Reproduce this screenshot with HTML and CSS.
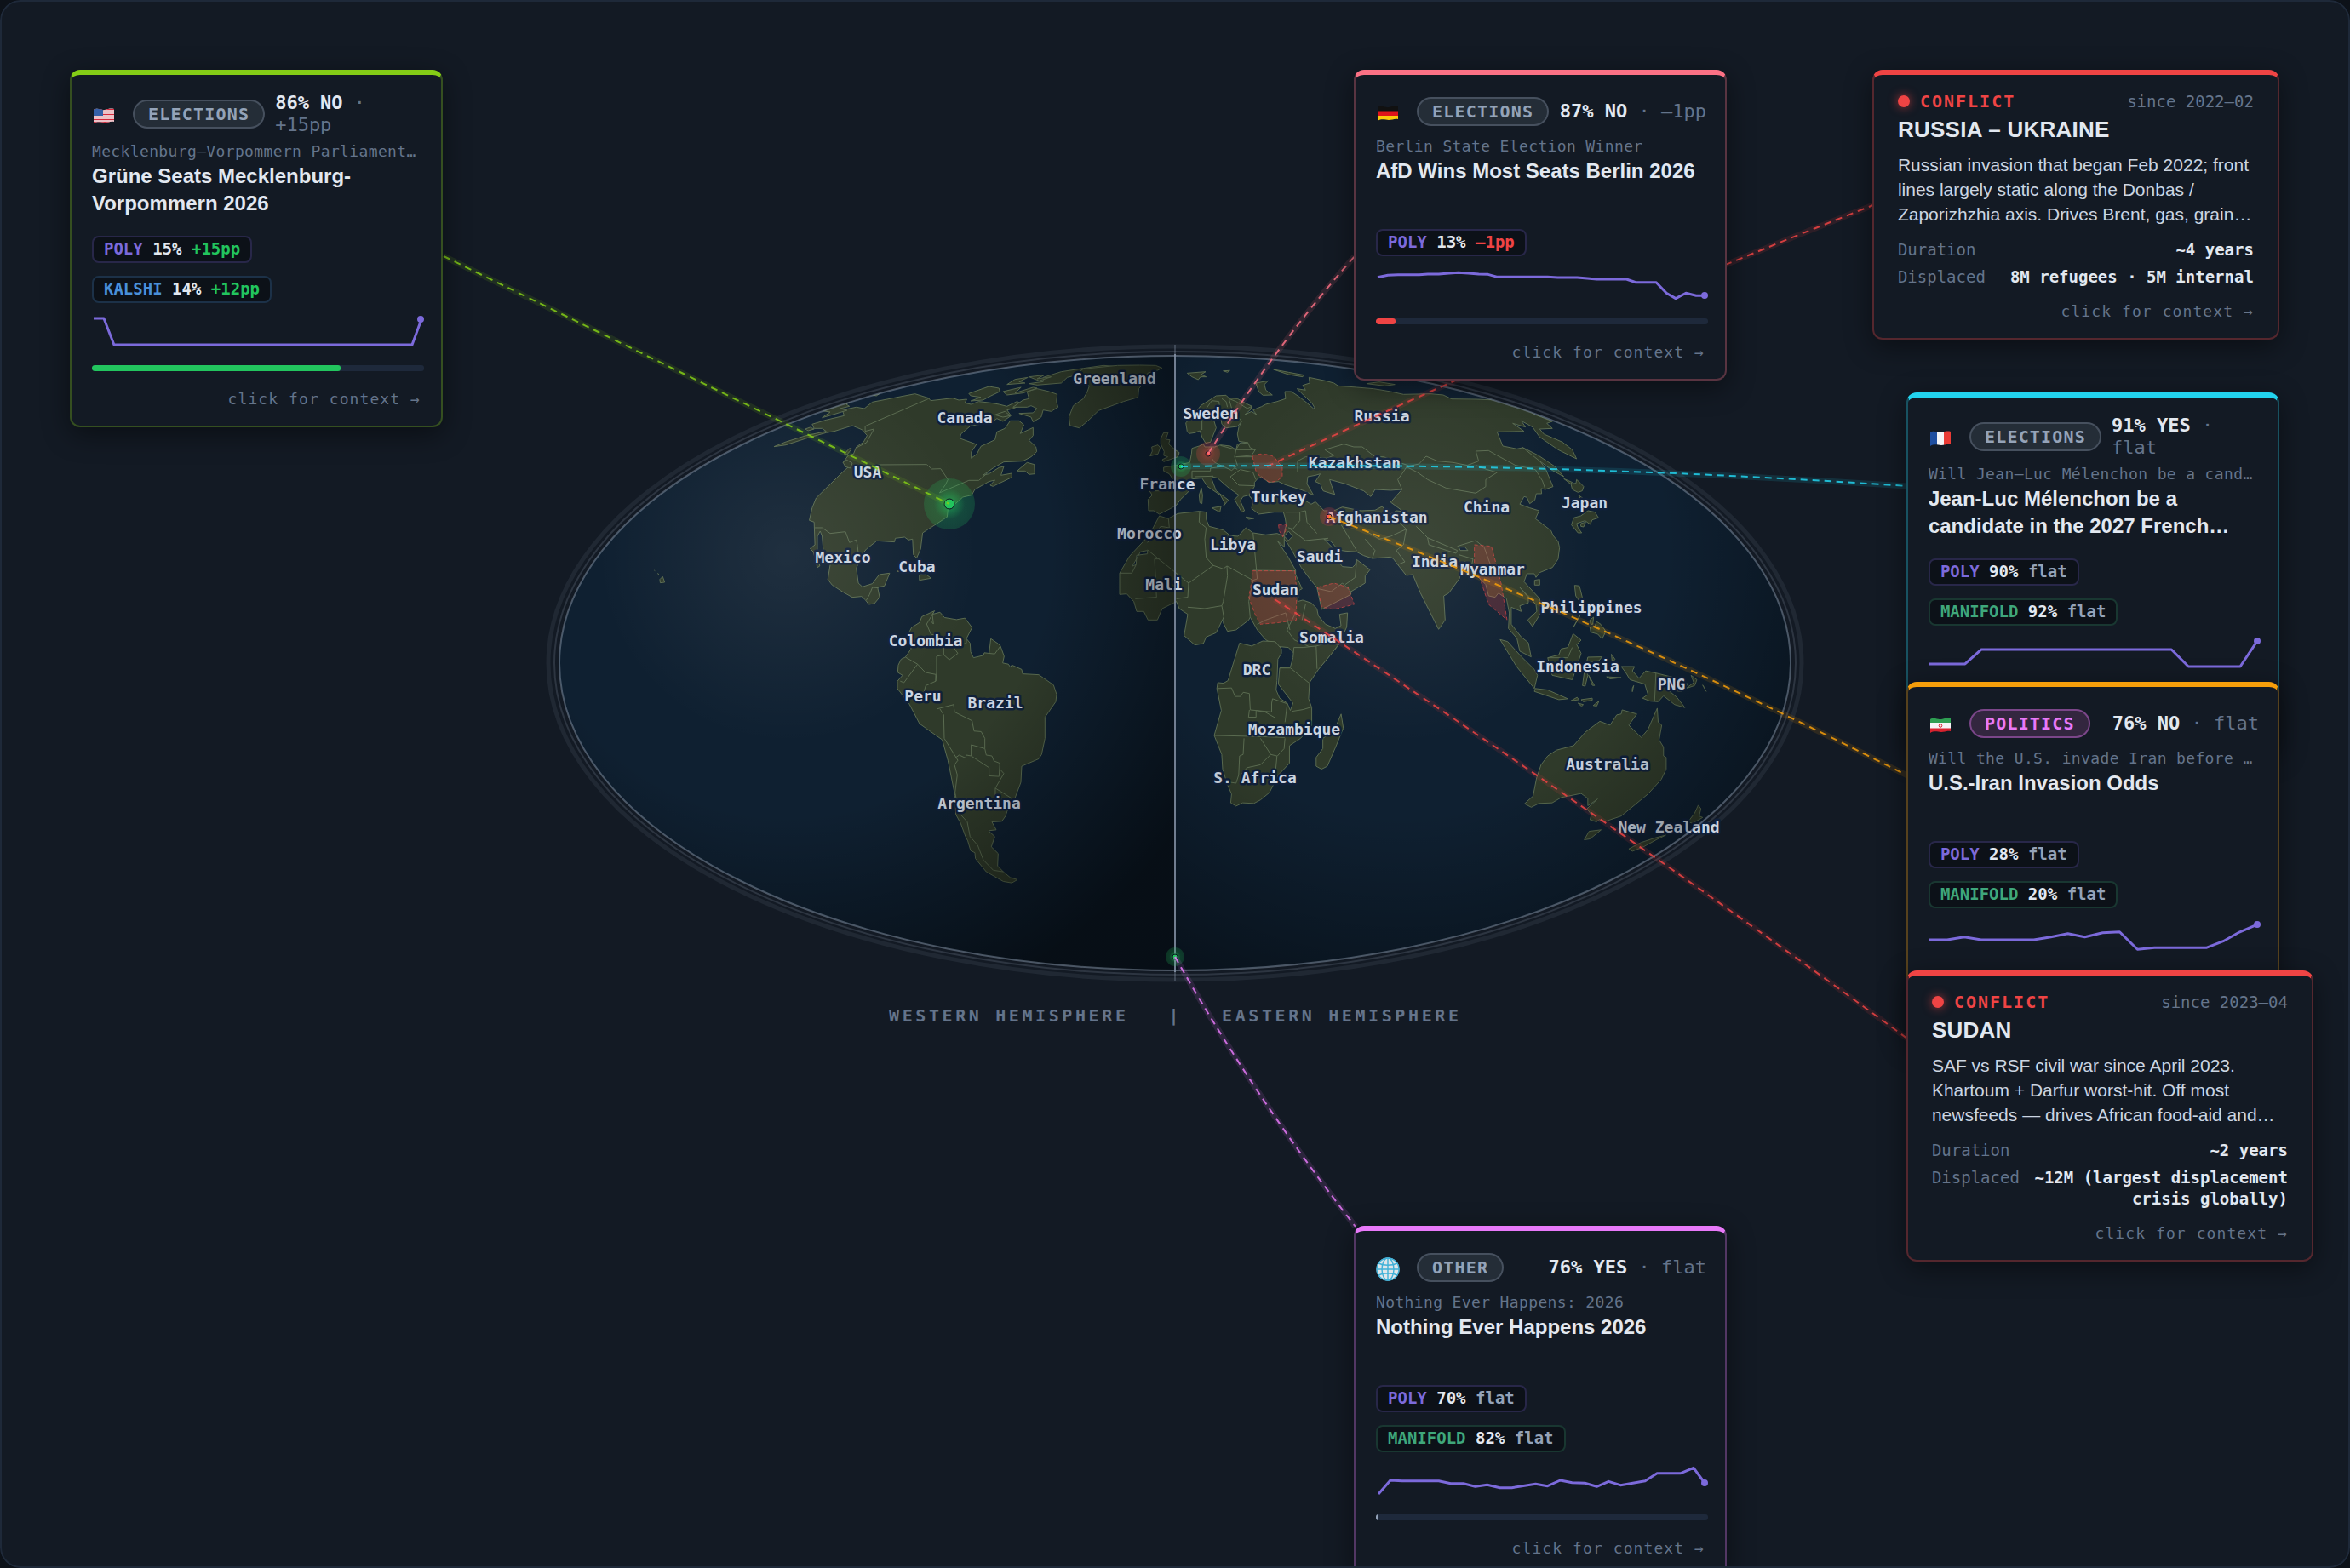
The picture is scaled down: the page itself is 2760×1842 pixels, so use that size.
FILE: index.html
```html
<!DOCTYPE html>
<html lang="en">
<head>
<meta charset="utf-8">
<meta name="viewport" content="width=device-width, initial-scale=1">
<title>World odds map</title>
<link rel="stylesheet" href="styles.css">
</head>
<body>
<main class="stage">
<svg class="world" viewBox="0 0 2760 1842" role="img" aria-label="World map with prediction markets and conflicts">
  <defs>
    <clipPath id="globe"><ellipse cx="1380" cy="779" rx="723" ry="361"/></clipPath>
    <radialGradient id="shadeWest" gradientUnits="userSpaceOnUse" cx="925" cy="650" r="560">
      <stop offset="0" stop-color="#fff" stop-opacity=".07"/>
      <stop offset=".4" stop-color="#fff" stop-opacity="0"/>
      <stop offset=".55" stop-color="#000" stop-opacity="0"/>
      <stop offset="1" stop-color="#000" stop-opacity=".55"/>
    </radialGradient>
    <radialGradient id="shadeEast" gradientUnits="userSpaceOnUse" cx="1648" cy="650" r="560">
      <stop offset="0" stop-color="#fff" stop-opacity=".07"/>
      <stop offset=".4" stop-color="#fff" stop-opacity="0"/>
      <stop offset=".55" stop-color="#000" stop-opacity="0"/>
      <stop offset="1" stop-color="#000" stop-opacity=".45"/>
    </radialGradient>
    <radialGradient id="glowGreen">
      <stop offset="0" stop-color="#22c55e" stop-opacity=".7"/>
      <stop offset=".6" stop-color="#22c55e" stop-opacity=".24"/>
      <stop offset="1" stop-color="#22c55e" stop-opacity=".2"/>
    </radialGradient>
    <radialGradient id="glowRed">
      <stop offset="0" stop-color="#ef4444" stop-opacity=".5"/>
      <stop offset=".6" stop-color="#ef4444" stop-opacity=".26"/>
      <stop offset="1" stop-color="#ef4444" stop-opacity=".2"/>
    </radialGradient>
  </defs>

  <ellipse class="ring ring-outer" cx="1380" cy="779" rx="736" ry="372"/>
  <ellipse class="ring ring-inner" cx="1380" cy="779" rx="729" ry="366"/>
  <ellipse class="ocean" cx="1380" cy="779" rx="723" ry="361"/>

  <g clip-path="url(#globe)">
    <!-- North America -->
    <g transform="translate(640 400) scale(.4719 .3333)">
      <g class="land">
        <path d="M815 217 921 188 955 203 960 212 1015 203 1030 210 1050 207 1045 220 1060 225 1080 215 1110 220 1130 225 1150 232 1175 215 1190 225 1165 240 1150 245 1160 265 1140 285 1125 275 1110 290 1060 300 1035 330 1033 345 1074 366 1061 393 1061 415 1075 400 1085 373 1120 350 1125 322 1145 310 1158 283 1180 283 1192 297 1183 328 1215 307 1215 335 1205 352 1222 375 1224 392 1210 410 1190 425 1142 428 1115 450 1090 475 1105 470 1130 448 1142 444 1135 475 1162 468 1162 482 1115 514 1108 510 1120 492 1105 497 1070 525 1062 545 1040 552 1022 575 1003 595 1001 622 940 678 935 735 925 767 917 755 915 700 905 703 895 693 872 697 870 710 826 706 800 735 788 757 775 803 780 855 790 868 815 857 832 825 858 820 845 865 828 870 833 905 820 927 806 930 798 915 788 902 765 905 740 885 715 862 704 842 710 790 693 745 690 690 685 672 678 690 678 745 684 795 678 800 668 745 660 733 672 720 670 640 658 634 665 590 675 555 740 465 760 440 742 430 755 405 768 400 775 375 793 358 802 335 790 315 765 300 720 320 700 325 650 345 600 368 570 374 600 357 650 335 700 320 690 310 670 310 665 295 700 280 745 265 740 245 775 235 795 240Z"/>
        <path d="M1200 180 1225 170 1255 180 1275 190 1273 215 1277 235 1260 250 1240 245 1235 270 1215 287 1210 270 1180 257 1215 255 1225 240 1210 230 1200 235 1165 235 1190 210 1205 205Z"/>
        <path d="M1055 187 1105 162 1130 168 1132 180 1110 195 1090 210 1060 213 1085 200 1060 195Z"/>
        <path d="M1240 130 1285 110 1340 98 1390 88 1428 92 1400 102 1350 112 1300 130 1285 150 1225 157 1205 152 1240 145Z"/>
        <path d="M1150 155 1170 137 1202 130 1180 145 1195 150Z"/>
        <path d="M1140 180 1185 165 1170 185 1215 165 1225 168 1190 185 1150 192Z"/>
        <path d="M1205 128 1242 122 1225 135 1260 128 1230 142Z"/>
        <path d="M1120 262 1145 250 1158 265 1140 270Z"/>
        <path d="M690 248 762 213 750 225 758 232 735 240 752 246 715 262 690 272 710 252Z"/>
        <path d="M812 192 833 187 825 195Z"/>
        <path d="M648 312 660 306 670 312 655 318Z"/>
        <path d="M1175 460 1200 430 1218 437 1219 470 1205 472 1195 460Z"/>
        <path d="M742 430 750 420 765 432 760 450 748 445Z"/>
        <path d="M745 400 758 380 764 382 752 402Z"/>
        <path d="M1340 100 1425 88 1480 87 1520 88 1536 97 1525 105 1500 115 1490 150 1478 170 1476 200 1440 215 1378 247 1350 285 1330 308 1307 300 1304 270 1315 230 1340 205 1350 180 1355 160 1330 140 1320 120Z"/>
        <path d="M876 813 884 811 880 815Z"/>
        <path d="M932 825 950 826 961 838 932 845Z"/>
        <path d="M286 842 293 832 298 852 287 854ZM280 821l4 3M272 810l2 2"/>
      </g>
      <path class="border" d="M955 205 797 302 797 320 819 312 800 360 775 378M828 438 950 437 963 453 985 452 1003 490 997 508 982 537 1055 493 1080 493 1103 465M672 660 690 660 710 680 748 674 758 712 775 703 778 725 780 750M800 915 808 895 815 870 830 872"/>
    </g>

    <!-- South America -->
    <g transform="translate(980 690) scale(.3333 .3444)">
      <path class="land" d="M353 80 345 92 372 85 388 103 430 110 460 105 485 137 465 175 478 190 480 220 490 240 525 232 528 223 545 225 551 175 578 193 585 200 598 235 593 258 613 262 620 272 625 265 660 280 663 295 720 298 772 333 783 365 780 390 742 443 742 515 730 570 720 585 660 610 657 665 635 722 625 735 608 765 603 780 590 798 555 800 570 827 543 830 565 850 553 885 577 908 575 950 595 970 620 990 645 997 625 1008 595 1003 535 970 497 925 495 905 480 898 470 865 462 850 445 805 428 775 425 710 400 590 380 520 300 465 265 400 222 345 222 320 240 300 223 290 225 265 235 245 250 238 270 210 265 150 272 137 300 120 308 100Z"/>
      <path class="border" d="M350 85 325 125 340 160 370 165 385 200M345 92 349 125 340 115M250 238 293 262 320 290 357 297 357 320 322 335 315 358M293 262 245 325 232 320M385 200 385 230 360 235 360 290 357 320M385 230 405 247 435 225 420 205 465 190 465 175M545 225 565 227 585 200M360 415 420 400 423 425 485 455 492 490 517 492 530 515 530 550 482 537 482 575 465 572 462 582 440 572 425 582M372 415 385 435 387 515 435 590 423 605 433 640 425 700 440 770 468 800 478 850 505 880 525 930 560 965 595 970M482 575 545 615 545 643 580 645 583 600 562 592 555 575 535 572 530 550M583 620 597 635 567 685 625 720M567 685 567 710"/>
    </g>

    <!-- Europe, Asia and northern Africa -->
    <g transform="translate(1300 400) scale(.3333)">
      <g class="land">
        <path d="M200 325 216 325 207 348 222 350 218 365 240 385 255 395 250 410 200 427 195 420 215 410 200 405 202 392 190 365 190 345Z"/>
        <path d="M158 375 180 368 188 378 180 400 152 407 160 390Z"/>
        <path d="M283 115 348 110 332 120 350 128 330 128 322 138 300 128Z"/>
        <path d="M410 107 433 106 425 112Z"/>
        <path d="M525 150 568 142 555 155 560 175 583 192 550 193 535 180Z"/>
        <path d="M587 102 640 112 695 122 690 128 640 120Z"/>
        <path d="M915 152 960 146 1015 155 980 160Z"/>
        <path d="M325 545 333 520 337 545 335 575 328 572Z"/>
        <path d="M370 590 402 585 398 605Z"/>
        <path d="M490 622 518 627 500 630Z"/>
        <path d="M370 205 385 195 420 193 430 203 460 205 490 222 512 232 505 245 480 235 455 240 468 265 475 285 460 303 420 308 405 295 400 265 385 270 378 285 385 308 370 345 365 358 348 362 335 340 328 318 310 325 290 328 283 320 278 290 310 260 330 230Z"/>
        <path d="M430 205 455 215 495 240 510 232 505 245 485 262 510 250 528 262 515 245 545 233 560 225 600 215 630 205 627 180 650 180 680 200 705 220 728 240 733 238 722 220 685 185 670 170 700 175 690 158 715 150 712 130 770 142 800 150 815 160 880 165 940 170 1000 180 1045 190 1140 188 1185 192 1215 206 1300 207 1375 210 1440 232 1495 252 1510 262 1570 285 1550 292 1570 310 1525 312 1540 330 1605 358 1640 385 1655 417 1590 385 1525 340 1500 305 1460 283 1475 305 1430 292 1470 320 1375 322 1395 372 1445 382 1465 378 1510 405 1545 450 1572 515 1545 525 1530 522 1532 540 1513 540 1508 562 1490 575 1480 553 1470 550 1455 577 1490 590 1523 600 1510 628 1565 670 1572 687 1590 708 1595 730 1590 770 1570 800 1525 818 1512 835 1506 822 1480 822 1470 850 1525 910 1532 955 1500 1008 1483 985 1515 955 1512 930 1455 870 1485 905 1485 925 1455 935 1460 955 1425 940 1425 1000 1460 1045 1485 1065 1495 1115 1455 1095 1445 1050 1415 1015 1418 960 1408 910 1380 890 1368 905 1345 900 1335 860 1305 830 1295 795 1260 780 1245 795 1243 838 1205 890 1187 900 1192 985 1169 1018 1105 890 1078 825 1055 828 1025 790 1010 770 1000 763 935 768 905 758 880 745 840 742 815 738 790 708 765 700 795 730 805 765 830 797 865 800 875 790 880 772 927 808 910 830 910 855 860 885 860 895 757 948 740 870 715 840 685 800 655 745 640 720 625 700 622 690 632 650 628 625 622 605 590 605 535 612 510 592 515 565 500 545 480 550 470 565 485 600 475 605 450 560 465 545 430 520 390 485 372 480 370 490 385 530 428 562 410 585 415 572 400 545 355 515 335 485 300 488 300 510 290 530 260 560 245 580 225 592 185 612 165 600 147 600 145 560 160 545 150 530 235 530 240 500 220 470 200 460 200 447 245 440 292 430 298 400 300 380 325 372 340 365 345 375 380 375 400 368 435 372 455 385 460 365 497 360 465 355 460 330 465 305 475 285 440 240Z"/>
        <path d="M185 618 215 628 250 610 325 602 350 605 350 630 360 655 410 668 435 688 462 690 490 660 515 678 560 685 600 680 625 690 625 728 600 705 640 765 665 810 665 825 688 875 678 880 672 920 690 915 720 925 740 945 745 970 770 1000 805 1015 825 1005 820 965 848 960 845 1010 815 1075 740 1165 715 1200 690 1170 650 1150 662 1105 640 1082 600 1078 560 1055 530 1020 505 975 500 985 455 1020 425 1025 410 995 412 975 385 1030 350 1045 340 1068 310 1073 272 1040 285 965 255 945 245 920 195 945 178 985 145 985 130 955 105 955 95 920 70 893 45 895 45 820 80 760 150 685Z"/>
      </g>
      <path class="sea" d="M520 500 530 488 545 480 570 500 605 497 625 507 690 528 728 545 705 505 708 480 735 475 752 470 735 497 752 505 762 530 803 543 792 512 785 490 840 505 905 530 930 550 945 525 1000 528 1040 525 1000 570 1045 603 1020 600 1000 612 985 603 970 585 945 598 895 600 830 587 800 600 765 600 735 568 720 577 700 565 640 560 590 548 545 552 515 562 500 545 520 515Z"/>
      <path class="sea" d="M118 745 143 740 143 752 105 757 103 790 90 795ZM625 690 640 672 655 690 640 705ZM1240 728 1262 728 1272 740 1245 740Z"/>
      <path class="border" d="M335 315 335 280 350 240 370 212 395 215 400 265M405 205 420 215 425 235M143 712 190 655 220 660 217 628M143 738 288 855 375 793 350 765 345 700 350 660 325 640 327 602M288 855 285 905 245 910M375 793 410 805 423 795 515 845 530 840 515 678M423 795 425 830 410 920 405 935 412 975M103 790 88 820 45 820M185 770 168 770 175 905 100 910M285 940 345 945 405 935M515 810 665 812M515 845 500 920 505 975M530 1000 560 985 630 960 645 1020M665 960 635 1020 660 1055 715 1080 760 1080 815 1060M740 1085 738 1165M688 985 700 930"/>
      <path class="border" d="M630 605 680 605 680 635 655 665 640 660M680 605 700 600 705 640 740 680M640 660 700 705 780 697M840 860 875 835 880 775M745 875 790 885 830 855 860 885M820 640 850 690 880 740M910 700 945 740 935 768M910 670 960 700 1000 690 1055 665 1045 720 1020 740 1050 780 1025 790M1000 612 1055 665M1090 655 1130 695 1235 740 1230 750 1135 720 1130 695M1240 755 1290 770 1285 795M1235 725 1300 705 1330 730 1355 800"/>
      <path class="border" d="M672 465 672 425 700 410 775 415 800 405 768 385 835 365 870 375 900 375 945 410 975 410 1060 440 1040 470 1025 490 1040 525M1055 445 1100 435 1125 408 1165 425 1220 430 1270 440 1310 425 1300 390 1345 388 1375 405 1440 440 1510 455 1535 495 1545 525M1055 445 1095 465 1130 490 1195 520 1300 538 1335 515 1335 490 1375 465 1340 455 1300 440"/>
      <path class="border" d="M400 370 455 385 450 410 460 440 440 458 380 430 370 415M450 385 523 385 510 405 455 410 515 410M435 480 470 455 515 465 525 490M435 480 465 510 520 512M300 488 300 460 365 460 365 450 440 440 460 455M310 480 375 478M455 385 470 360 497 360 505 378 523 385"/>
      <path class="zone" d="M512 405 540 400 570 402 590 410 600 425 618 445 618 480 600 495 575 500 540 480 525 460Z"/>
      <path class="zone" d="M513 812H662L668 870V985L600 995 540 1000 520 960 500 905 510 850Z"/>
      <path class="zone" d="M742 870 800 855 850 870 872 930 800 948 757 940Z"/>
      <path class="zone" d="M1295 720 1355 725 1375 800 1390 860 1410 985 1345 930 1315 840 1295 795Z"/>
      <path class="zone" d="M605 650H632L630 670 620 692 607 670Z"/>
    </g>

    <!-- East Asian islands -->
    <g class="land" transform="translate(1680 400) scale(.3333)">
      <path d="M367 845 385 842 385 862 367 862Z"/>
      <path d="M508 863 525 865 535 905 525 918 512 900Z"/>
      <path d="M527 970 503 1012 515 990Z"/>
      <path d="M562 1010 580 1008 585 990 600 1000 618 1025 605 1052 590 1035 565 1028Z"/>
      <path d="M562 985 575 975 572 1000 565 1000Z"/>
      <path d="M495 505 513 503 515 490 528 502 540 515 535 530 520 535 500 525Z"/>
      <path d="M470 487 500 500 493 505Z"/>
      <path d="M522 545 540 558 545 580 530 560Z"/>
      <path d="M505 625 530 618 555 600 580 605 592 625 570 632 563 648 545 635 515 645 520 660 533 678 520 678 497 650Z"/>
      <path d="M530 645 547 640 540 657 530 655Z"/>
      <path d="M325 377 380 405 440 445 470 480 430 458 385 425Z"/>
    </g>

    <!-- Southern Africa, Indonesia and Oceania -->
    <g transform="translate(1300 690) scale(.523 .3444)">
      <g class="land">
        <path d="M298 190 325 200 350 183 378 185 392 210 392 225 384 245 382 318 380 350 388 378 405 395 412 420 418 395 385 330 388 275 412 272 418 240 420 205 440 205 470 200 495 190 520 195 505 225 475 280 455 325 453 380 460 410 460 470 435 515 410 540 410 600 385 640 365 700 345 725 330 737 305 735 290 746 278 735 280 705 270 670 260 620 258 570 241 505 257 420 247 345 249 325 262 327 272 318Z"/>
        <path d="M526 432 531 480 515 540 495 610 482 620 470 610 470 580 485 550 485 515 510 490Z"/>
        <path d="M883 178 900 185 930 235 960 280 967 300 960 345 920 270Z"/>
        <path d="M962 345 990 350 1035 380 1015 383 960 355Z"/>
        <path d="M1047 158 1065 180 1055 195 1065 225 1045 315 1000 300 990 240 1015 230 1020 210 1035 205Z"/>
        <path d="M1080 238 1112 237 1105 250 1075 255 1080 300 1074 337 1068 335 1072 290ZM1082 300 1095 335 1090 334ZM1090 255 1105 262 1095 268Z"/>
        <path d="M1042 387 1056 375 1060 383ZM1065 383 1090 378 1090 385 1070 390ZM1092 403 1105 388 1100 405ZM1058 395 1070 400 1066 406ZM1133 228 1141 245 1135 258ZM1122 305 1155 308 1130 312Z"/>
        <path d="M1155 270 1185 270 1180 285 1195 310 1210 285 1235 293 1280 310 1305 330 1290 355 1260 350 1280 375 1298 410 1275 400 1250 370 1238 390 1220 388 1203 378 1215 365 1208 330 1175 315 1165 290Z"/>
        <path d="M1312 300 1325 315 1320 335 1300 345 1318 325ZM1338 333 1346 355ZM1180 345 1183 335 1180 356Z"/>
        <path d="M1236 412 1238 460 1246 470 1240 520 1250 545 1250 575 1256 580 1256 620 1245 655 1215 705 1155 780 1120 798 1105 792 1100 800 1085 793 1088 775 1078 755 1102 722 1080 745 1080 720 1065 703 1020 717 1000 735 970 737 953 750 938 738 957 712 965 650 975 605 990 575 1010 555 1048 540 1075 493 1107 457 1130 470 1145 435 1155 432 1157 418 1190 432 1172 470 1200 512 1215 485Z"/>
        <path d="M1083 832 1110 827 1085 858 1072 861Z"/>
        <path d="M1328 743 1334 755 1330 780 1338 785 1315 805 1305 800 1320 770Z"/>
        <path d="M1255 845 1235 860 1205 885 1180 900 1172 892 1200 870 1230 855Z"/>
      </g>
      <path class="border" d="M247 345 280 343 288 372 300 372 306 358 320 362 322 418 370 425M241 505 320 508 400 512M308 515 306 570 298 575 296 640 290 668 278 665M345 515 368 570 382 575 378 640M368 570 345 605 315 615 300 640M320 418 318 443 335 443 335 420 355 425 378 445M370 425 370 395 372 380 405 397 400 460M415 423 440 417 460 408M388 275 412 275 453 325M470 200 472 278M383 575 398 550 400 515M1233 293 1230 388M990 240 1035 240 1045 205"/>
    </g>
  </g>

  <g class="place">
    <text x="1309" y="451">Greenland</text>
    <text x="1133" y="497">Canada</text>
    <text x="1019" y="561">USA</text>
    <text x="990" y="661">Mexico</text>
    <text x="1077" y="672">Cuba</text>
    <text x="1087" y="759">Colombia</text>
    <text x="1084" y="824">Peru</text>
    <text x="1169" y="832">Brazil</text>
    <text x="1150" y="950">Argentina</text>
    <text x="1371" y="575">France</text>
    <text x="1350" y="633">Morocco</text>
    <text x="1367" y="693">Mali</text>
    <text x="1422" y="492">Sweden</text>
    <text x="1623" y="495">Russia</text>
    <text x="1591" y="550">Kazakhstan</text>
    <text x="1502" y="590">Turkey</text>
    <text x="1617" y="614">Afghanistan</text>
    <text x="1448" y="646">Libya</text>
    <text x="1550" y="660">Saudi</text>
    <text x="1498" y="699">Sudan</text>
    <text x="1685" y="666">India</text>
    <text x="1564" y="755">Somalia</text>
    <text x="1476" y="793">DRC</text>
    <text x="1746" y="602">China</text>
    <text x="1861" y="597">Japan</text>
    <text x="1753" y="675">Myanmar</text>
    <text x="1869" y="720">Philippines</text>
    <text x="1853" y="789">Indonesia</text>
    <text x="1963" y="810">PNG</text>
    <text x="1520" y="863">Mozambique</text>
    <text x="1888" y="904">Australia</text>
    <text x="1960" y="978">New Zealand</text>
    <text x="1474" y="920">S. Africa</text>
  </g>

  <g clip-path="url(#globe)">
    <rect x="657" y="418" width="723" height="722" fill="url(#shadeWest)"/>
    <rect x="1380" y="418" width="723" height="722" fill="url(#shadeEast)"/>
  </g>
  <ellipse class="ring ring-edge" cx="1380" cy="779" rx="723" ry="361"/>
  <path class="meridian" d="M1380 405V418M1380 1140V1152" opacity=".4"/>
  <path class="meridian" d="M1380 416V1142"/>

  <g class="marker up">
    <circle cx="1115" cy="592" r="30" fill="url(#glowGreen)"/><circle class="dot" cx="1115" cy="592" r="6"/>
    <circle cx="1387" cy="548" r="12" fill="url(#glowGreen)"/><circle class="dot" cx="1387" cy="548" r="3"/>
    <circle cx="1380" cy="1124" r="11" fill="url(#glowGreen)"/><circle class="dot" cx="1380" cy="1124" r="3"/>
  </g>
  <g class="marker down">
    <circle cx="1419" cy="533" r="14" fill="url(#glowRed)"/><circle class="dot" cx="1419" cy="533" r="3"/>
    <circle cx="1561" cy="607" r="11" fill="url(#glowRed)"/><circle class="dot" cx="1561" cy="607" r="3"/>
  </g>

  <g class="link lime"><path class="halo" d="M521 301 1115 592"/><path class="dash" d="M521 301 1115 592"/></g>
  <g class="link rose"><path class="halo" d="M1419 533Q1499 405 1591 301"/><path class="dash" d="M1419 533Q1499 405 1591 301"/></g>
  <g class="link red"><path class="halo" d="M1488 548Q1838 384 2200 241"/><path class="dash" d="M1488 548Q1838 384 2200 241"/></g>
  <g class="link cyan"><path class="halo" d="M1387 548Q1813 542 2240 571"/><path class="dash" d="M1387 548Q1813 542 2240 571"/></g>
  <g class="link amber"><path class="halo" d="M1561 607Q1904 740 2240 911"/><path class="dash" d="M1561 607Q1904 740 2240 911"/></g>
  <g class="link red"><path class="halo" d="M1497 704Q1872 950 2240 1220"/><path class="dash" d="M1497 704Q1872 950 2240 1220"/></g>
  <g class="link fuchsia"><path class="halo" d="M1380 1124Q1474 1290 1592 1441"/><path class="dash" d="M1380 1124Q1474 1290 1592 1441"/></g>

  <text class="hemispheres" x="1044" y="1200">WESTERN HEMISPHERE   |   EASTERN HEMISPHERE</text>
</svg>

<article class="card lime at-mecklenburg">
  <header class="head">
    <svg class="flag" viewBox="0 0 28 32" aria-label="United States"><clipPath id="wave"><path d="M2 11C7 8 11 12 15 11S22 9 26 10V25C22 24 19 26 15 26S7 24 2 27Z"/></clipPath><g clip-path="url(#wave)"><path fill="#f4f4f6" d="M0 8h28v20H0z"/><path stroke="#d5283c" stroke-width="1.5" d="M0 10.500h28M0 13.500h28M0 16.500h28M0 19.500h28M0 22.500h28M0 25.500h28"/><path fill="#3560a8" d="M0 8h13v10H0z"/></g></svg>
    <span class="topic">ELECTIONS</span>
    <span class="odds"><b>86% NO</b> · <span>+15pp</span></span>
  </header>
  <p class="market">Mecklenburg–Vorpommern Parliament…</p>
  <h2 class="title">Grüne Seats Mecklenburg-Vorpommern 2026</h2>
  <div class="quotes">
    <span class="quote poly"><i>POLY</i> 15% <em class="gain">+15pp</em></span>
    <span class="quote kalshi"><i>KALSHI</i> 14% <em class="gain">+12pp</em></span>
  </div>
  <svg class="spark" viewBox="0 0 391 52" aria-hidden="true"><path d="M2 8 14 8 26 39 377 39 388 9"/><circle cx="387" cy="9" r="4"/></svg>
  <div class="bar"><div class="fill gain-bg" style="width:75%"></div></div>
  <button class="more" type="button">click for context →</button>
</article>

<article class="card rose at-berlin">
  <header class="head">
    <svg class="flag" viewBox="0 0 28 32" aria-label="Germany"><g clip-path="url(#wave)"><path fill="#111" d="M0 8h28v8H0z"/><path fill="#e0131b" d="M0 15.500h28v6H0z"/><path fill="#fbc90b" d="M0 21h28v7H0z"/></g></svg>
    <span class="topic">ELECTIONS</span>
    <span class="odds"><b>87% NO</b> · <span>–1pp</span></span>
  </header>
  <p class="market">Berlin State Election Winner</p>
  <h2 class="title">AfD Wins Most Seats Berlin 2026</h2>
  <div class="quotes">
    <span class="quote poly"><i>POLY</i> 13% <em class="loss">–1pp</em></span>
  </div>
  <svg class="spark" viewBox="0 0 391 52" aria-hidden="true"><path d="M2 14.700 14 12.300 26 11.700H51L61 11H74L86 10 97 9.300 109 10 121 11 132 11.300 143 14.300H202L214 15H237L249 16 260 17H295L306 20.700H330L342 33.300 353 39.700 365 33.300 377 36.300H388"/><circle cx="387" cy="36" r="4"/></svg>
  <div class="bar"><div class="fill loss-bg" style="width:6%"></div></div>
  <button class="more" type="button">click for context →</button>
</article>

<article class="card conflict red at-ukraine">
  <header class="alert"><span class="pulse"></span><strong>CONFLICT</strong><time>since 2022–02</time></header>
  <h2 class="name">RUSSIA – UKRAINE</h2>
  <p class="brief">Russian invasion that began Feb 2022; front lines largely static along the Donbas / Zaporizhzhia axis. Drives Brent, gas, grain…</p>
  <dl class="facts">
    <div><dt>Duration</dt><dd>~4 years</dd></div>
    <div><dt>Displaced</dt><dd>8M refugees · 5M internal</dd></div>
  </dl>
  <button class="more" type="button">click for context →</button>
</article>

<article class="card cyan at-france">
  <header class="head">
    <svg class="flag" viewBox="0 0 28 32" aria-label="France"><g clip-path="url(#wave)"><path fill="#1f4fa0" d="M0 8h10v20H0z"/><path fill="#f4f4f6" d="M10 8h8v20h-8z"/><path fill="#ea3b35" d="M18 8h10v20H18z"/></g></svg>
    <span class="topic">ELECTIONS</span>
    <span class="odds"><b>91% YES</b> · <span>flat</span></span>
  </header>
  <p class="market">Will Jean–Luc Mélenchon be a cand…</p>
  <h2 class="title">Jean-Luc Mélenchon be a candidate in the 2027 French…</h2>
  <div class="quotes">
    <span class="quote poly"><i>POLY</i> 90% <em>flat</em></span>
    <span class="quote manifold"><i>MANIFOLD</i> 92% <em>flat</em></span>
  </div>
  <svg class="spark" viewBox="0 0 391 52" aria-hidden="true"><path d="M1 35H43L62 18H286L306 38H367L387 8"/><circle cx="387" cy="8" r="4"/></svg>
</article>

<article class="card amber at-iran">
  <header class="head">
    <svg class="flag" viewBox="0 0 28 32" aria-label="Iran"><g clip-path="url(#wave)"><path fill="#2e9e52" d="M0 8h28v8H0z"/><path fill="#f4f4f6" d="M0 15h28v7H0z"/><path fill="#d8232f" d="M0 21.500h28v7H0z"/></g><circle cx="14" cy="18.500" r="1.800" fill="none" stroke="#d8232f"/></svg>
    <span class="topic politics">POLITICS</span>
    <span class="odds"><b>76% NO</b> · <span>flat</span></span>
  </header>
  <p class="market">Will the U.S. invade Iran before …</p>
  <h2 class="title">U.S.-Iran Invasion Odds</h2>
  <div class="quotes">
    <span class="quote poly"><i>POLY</i> 28% <em>flat</em></span>
    <span class="quote manifold"><i>MANIFOLD</i> 20% <em>flat</em></span>
  </div>
  <svg class="spark" viewBox="0 0 391 52" aria-hidden="true"><path d="M1 27H22L42 23.700 62 27H124L144 23.700 164 19.700 184 23.700 205 18.700 225 17.700 246 38.300 266 36.300H327L347 28.700 366 18 387 9"/><circle cx="387" cy="9" r="4"/></svg>
</article>

<article class="card conflict red at-sudan">
  <header class="alert"><span class="pulse"></span><strong>CONFLICT</strong><time>since 2023–04</time></header>
  <h2 class="name">SUDAN</h2>
  <p class="brief">SAF vs RSF civil war since April 2023. Khartoum + Darfur worst-hit. Off most newsfeeds — drives African food-aid and…</p>
  <dl class="facts">
    <div><dt>Duration</dt><dd>~2 years</dd></div>
    <div><dt>Displaced</dt><dd>~12M (largest displacement crisis globally)</dd></div>
  </dl>
  <button class="more" type="button">click for context →</button>
</article>

<article class="card fuchsia at-nothing">
  <header class="head">
    <svg class="flag" viewBox="0 0 28 32" aria-label="World"><circle cx="14" cy="18" r="13.500" fill="#dfe6ea"/><g fill="none" stroke="#3fb1d8" stroke-width="1.400"><circle cx="14" cy="18" r="13"/><ellipse cx="14" cy="18" rx="7" ry="13"/><path d="M14 5v26M1 18h26M3 11c6 3 16 3 22 0M3 25c6-3 16-3 22 0"/></g></svg>
    <span class="topic">OTHER</span>
    <span class="odds"><b>76% YES</b> · <span>flat</span></span>
  </header>
  <p class="market">Nothing Ever Happens: 2026</p>
  <h2 class="title">Nothing Ever Happens 2026</h2>
  <div class="quotes">
    <span class="quote poly"><i>POLY</i> 70% <em>flat</em></span>
    <span class="quote manifold"><i>MANIFOLD</i> 82% <em>flat</em></span>
  </div>
  <svg class="spark" viewBox="0 0 391 52" aria-hidden="true"><path d="M3 39 17 23 31 23.700H74L88 26.700H103L117 30.300 131 28.300 146 31.700H160L188 27.300 202 29.700 217 23 231 25.700 246 26.300 260 30.300 274 24.300 288 28.700 317 23.700 331 14.700H359L374 8.300 387 26"/><circle cx="387" cy="26" r="4"/></svg>
  <div class="bar"><div class="fill flat-bg" style="width:0.5%"></div></div>
  <button class="more" type="button">click for context →</button>
</article>
</main>
</body>
</html>
```

FILE: styles.css
```css
:root {
  --bg: #131a24;
  --text: #e2e8f0;
  --soft: #94a3b8;
  --muted: #64748b;
  --mono: "DejaVu Sans Mono", monospace;
  --sans: "Liberation Sans", Arial, sans-serif;
}

* { box-sizing: border-box; }

body {
  margin: 0;
  background: #0d1219;
  color: var(--text);
  font-family: var(--sans);
}

.stage {
  position: relative;
  overflow: hidden;
  border-radius: 24px;
  background: var(--bg);
}

.stage::after {
  content: "";
  position: absolute;
  inset: 0;
  border: 2px solid #1e2939;
  border-radius: 24px;
  pointer-events: none;
}

.world { display: block; width: 100%; height: auto; }

/* accents */
.lime { --accent: #84cc16; }
.rose { --accent: #fb7185; }
.red { --accent: #ef4444; }
.cyan { --accent: #22d3ee; }
.amber { --accent: #f59e0b; }
.fuchsia { --accent: #e879f9; }

/* map */
.ocean { fill: #0f2031; }
.ring { fill: none; stroke: #94a3b8; }
.ring-outer { stroke-width: 5; stroke-opacity: .1; }
.ring-inner { stroke-width: 2; stroke-opacity: .2; }
.ring-edge { stroke-width: 2; stroke-opacity: .45; }
.land { fill: #2f3a2a; }
.land, .land path, .border, .sea {
  stroke: #5a6b50;
  stroke-width: 1;
  stroke-linejoin: round;
  vector-effect: non-scaling-stroke;
}
.border { fill: none; }
.sea { fill: #0f2031; }
.zone {
  fill: #ef4444;
  fill-opacity: .24;
  stroke: #ef4444;
  stroke-opacity: .6;
  stroke-width: 1;
  stroke-dasharray: 4 3;
  vector-effect: non-scaling-stroke;
}
.place {
  font: 700 18px var(--mono);
  text-anchor: middle;
  fill: #cbd5e1;
  stroke: #10203a;
  stroke-width: 5;
  stroke-linejoin: round;
  paint-order: stroke;
}
.meridian { stroke: #8491a5; stroke-width: 2; stroke-opacity: .85; }
.dot { stroke: #0b1420; stroke-width: 1; }
.up .dot { fill: #22c55e; }
.down .dot { fill: #ff5a4f; }
.link { fill: none; stroke: var(--accent); }
.halo { stroke-width: 7; stroke-opacity: .12; }
.dash { stroke-width: 2; stroke-opacity: .85; stroke-dasharray: 8 6; }
.hemispheres {
  font: 700 20px var(--mono);
  letter-spacing: .18em;
  white-space: pre;
  fill: var(--muted);
}

/* cards pinned over the map */
.card {
  position: absolute;
  width: 438px;
  padding: 20px 20px 20px 24px;
  border: 2px solid color-mix(in srgb, var(--accent) 30%, var(--bg));
  border-top: 6px solid var(--accent);
  border-radius: 12px;
  background: var(--bg);
  box-shadow: 0 8px 32px rgba(0, 0, 0, .45);
}
.conflict { width: 478px; padding: 20px 28px; }

.at-mecklenburg { left: 2.970%; top: 4.450%; }
.at-berlin { left: 57.610%; top: 4.450%; }
.at-ukraine { left: 79.670%; top: 4.450%; }
.at-france { left: 81.120%; top: 25.030%; height: 420px; }
.at-iran { left: 81.120%; top: 43.460%; height: 420px; }
.at-sudan { left: 81.120%; top: 61.900%; }
.at-nothing { left: 57.610%; top: 78.150%; }

.head {
  display: flex;
  align-items: center;
  gap: 12px;
  min-height: 46px;
  padding-right: 2px;
}
.flag { flex: none; width: 28px; height: 32px; margin-right: 8px; }
.topic {
  flex: none;
  height: 34px;
  padding: 0 16px;
  border: 2px solid rgba(148, 163, 184, .3);
  border-radius: 17px;
  background: #242d37;
  color: var(--soft);
  font: 700 20px/30px var(--mono);
  letter-spacing: .06em;
}
.politics {
  border-color: rgba(232, 121, 249, .4);
  background: #33263f;
  color: #e879f9;
}
.odds {
  margin-left: auto;
  color: var(--muted);
  font: 400 22px/26px var(--mono);
}
.odds b { color: var(--text); }

.market {
  margin: 7px 0 2px;
  color: var(--muted);
  font: 400 18px/22px var(--mono);
  letter-spacing: .02em;
  white-space: nowrap;
}
.title {
  min-height: 62px;
  margin: 0 0 22px;
  font: 700 24px/32px var(--sans);
}

.quotes {
  display: flex;
  flex-direction: column;
  align-items: flex-start;
  gap: 15px;
}
.quote {
  height: 32px;
  padding: 0 12px;
  border: 2px solid color-mix(in srgb, var(--venue) 25%, #0c1118);
  border-radius: 8px;
  background: #0c1118;
  color: var(--text);
  font: 700 19px/27px var(--mono);
}
.quote i { color: var(--venue); font-style: normal; }
.quote em { color: var(--soft); font-style: normal; }
.quote .gain { color: #22c55e; }
.quote .loss { color: #ef4444; }
.poly { --venue: #7c6adb; }
.kalshi { --venue: #4a90d9; }
.manifold { --venue: #3fa77b; }

.spark {
  display: block;
  width: 100%;
  height: 52px;
  margin: 10px 0 11px;
  fill: none;
  stroke: #7c6adb;
  stroke-width: 3;
  stroke-linejoin: round;
}
.spark circle { fill: #7c6adb; stroke: none; }

.bar {
  height: 7px;
  overflow: hidden;
  border-radius: 3px;
  background: #1e293b;
}
.fill { height: 100%; border-radius: 3px; }
.gain-bg { background: #22c55e; }
.loss-bg { background: #ef4444; }
.flat-bg { border-radius: 0; background: var(--soft); }

.more {
  display: block;
  margin: 22px 4px 0 auto;
  padding: 0;
  border: 0;
  background: none;
  color: var(--muted);
  font: 400 18px/22px var(--mono);
  letter-spacing: .06em;
}

/* conflict cards */
.alert { display: flex; align-items: center; gap: 12px; height: 22px; }
.pulse {
  width: 14px;
  height: 14px;
  border-radius: 50%;
  background: #ef4444;
  box-shadow: 0 0 12px rgba(239, 68, 68, .7);
}
.alert strong { color: #ef4444; font: 700 20px/22px var(--mono); letter-spacing: .1em; }
.alert time { margin-left: auto; color: var(--muted); font: 400 19px/22px var(--mono); }
.name { margin: 6px 0 11px; font: 700 26px/32px var(--sans); letter-spacing: .01em; }
.brief { margin: 0 0 15px; color: #cbd5e1; font: 400 21px/29px var(--sans); }
.facts { margin: 0; font: 400 19px/25px var(--mono); }
.facts div { display: flex; justify-content: space-between; gap: 16px; }
.facts div + div { margin-top: 7px; }
.facts dt { color: var(--muted); }
.facts dd { margin: 0; font-weight: 700; text-align: right; }
.conflict .more { margin: 17px 0 0 auto; }
```
